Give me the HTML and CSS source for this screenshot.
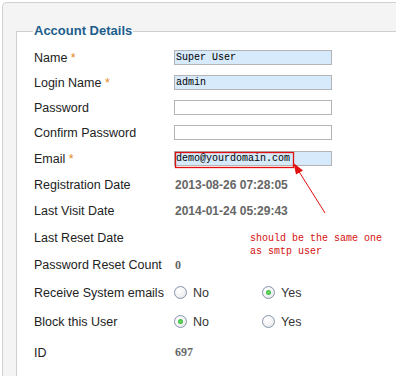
FILE: index.html
```html
<!DOCTYPE html>
<html lang="en">
<head>
    <meta charset="UTF-8">
    <title>Account Details</title>
    <link rel="stylesheet" href="styles.css">
</head>
<body>

<div class="panel">
    <fieldset class="details">
        <legend>Account Details</legend>

        <div class="row h25">
            <label for="name">Name <span class="star">*</span></label>
            <input type="text" id="name" value="Super User">
        </div>
        <div class="row h25">
            <label for="username">Login Name <span class="star">*</span></label>
            <input type="text" id="username" value="admin">
        </div>
        <div class="row h25">
            <label for="password">Password</label>
            <input type="password" id="password" class="plain">
        </div>
        <div class="row h25">
            <label for="password2">Confirm Password</label>
            <input type="password" id="password2" class="plain">
        </div>
        <div class="row h27">
            <label for="email">Email <span class="star">*</span></label>
            <input type="text" id="email" value="demo@yourdomain.com">
        </div>
        <div class="row h25">
            <label>Registration Date</label>
            <span class="value">2013-08-26 07:28:05</span>
        </div>
        <div class="row h27">
            <label>Last Visit Date</label>
            <span class="value">2014-01-24 05:29:43</span>
        </div>
        <div class="row h27">
            <label>Last Reset Date</label>
            <span class="value"></span>
        </div>
        <div class="row h28">
            <label>Password Reset Count</label>
            <span class="value num">0</span>
        </div>
        <div class="row h27">
            <label>Receive System emails</label>
            <div class="radios">
                <span class="option"><span class="radio"></span>No</span>
                <span class="option"><span class="radio checked"></span>Yes</span>
            </div>
        </div>
        <div class="row h31">
            <label>Block this User</label>
            <div class="radios">
                <span class="option"><span class="radio checked"></span>No</span>
                <span class="option"><span class="radio"></span>Yes</span>
            </div>
        </div>
        <div class="row h31">
            <label>ID</label>
            <span class="value num">697</span>
        </div>
    </fieldset>
</div>

<!-- red markup drawn over the screenshot -->
<svg class="markup" width="396" height="376" viewBox="0 0 396 376">
    <rect x="175.5" y="152.5" width="118" height="15" fill="none" stroke="#e01010" stroke-width="1.3"/>
    <line x1="325" y1="213" x2="298" y2="170" stroke="#e01010" stroke-width="1"/>
    <polygon points="293.5,163 303,170.5 296,174.5" fill="#e01010"/>
</svg>
<div class="note">should be the same one<br>as smtp user</div>

</body>
</html>
```

FILE: styles.css
```css
html, body {
    margin: 0;
    padding: 0;
    overflow: hidden;
    background-color: #fff;
}
body {
    font-family: "Liberation Sans", Arial, sans-serif;
    font-size: 12px;
    color: #222;
    position: relative;
    width: 396px;
    height: 376px;
}
.panel {
    box-sizing: border-box;
    height: 374px;
    margin: 2px 0 0 2px;
    padding: 20px 0 0 13px;
    background-color: #f4f4f4;
    border: 1px solid #d0d0d0;
    border-right: none;
    border-bottom: none;
    border-radius: 5px 0 0 0;
}
.details {
    box-sizing: border-box;
    height: 100%;
    margin: 0;
    padding: 6px 0 0 17px;
    background-color: #fff;
    border: 1px solid #cfcfcf;
    border-right: none;
    border-bottom: none;
}
.details legend {
    margin-left: -1px;
    padding: 0 1px;
    font-size: 13px;
    line-height: 16px;
    font-weight: bold;
    color: #215d8c;
}
.row {
    display: flex;
    align-items: center;
}
.h25 { height: 25px; }
.h27 { height: 27px; }
.h28 { height: 28px; }
.h31 { height: 31px; }
.row label {
    width: 140px;
    flex-shrink: 0;
    font-size: 12.5px;
}
.star {
    color: #e08a1e;
}
input {
    box-sizing: border-box;
    width: 158px;
    height: 15px;
    margin: 0;
    padding: 0 1px;
    border: 1px solid #b4b4b4;
    background-color: #d6eafc;
    font-family: "Liberation Mono", "Courier New", monospace;
    font-size: 10px;
    color: #000;
    outline: none;
}
input.plain {
    background-color: #fff;
}
.value {
    padding-left: 1px;
    font-weight: bold;
    color: #666;
}
.value.num {
    font-family: "Liberation Serif", "Times New Roman", serif;
}
.radios {
    display: flex;
}
.option {
    display: flex;
    align-items: center;
    gap: 6px;
    width: 88px;
    font-size: 12.5px;
    color: #333;
}
.radio {
    box-sizing: border-box;
    width: 13px;
    height: 13px;
    border-radius: 50%;
    border: 1px solid #8797ad;
    background: radial-gradient(circle at 40% 35%, #fff 0%, #f4f4f4 50%, #d8dde3 100%);
    display: flex;
    align-items: center;
    justify-content: center;
}
.radio.checked::after {
    content: "";
    width: 5px;
    height: 5px;
    border-radius: 50%;
    background: radial-gradient(circle, #6ee06e 0%, #22a822 100%);
}
.markup {
    position: absolute;
    left: 0;
    top: 0;
    pointer-events: none;
}
.note {
    position: absolute;
    left: 250px;
    top: 232px;
    font-family: "Liberation Mono", "Courier New", monospace;
    font-size: 10px;
    line-height: 13px;
    color: #d41010;
    white-space: nowrap;
}
```
